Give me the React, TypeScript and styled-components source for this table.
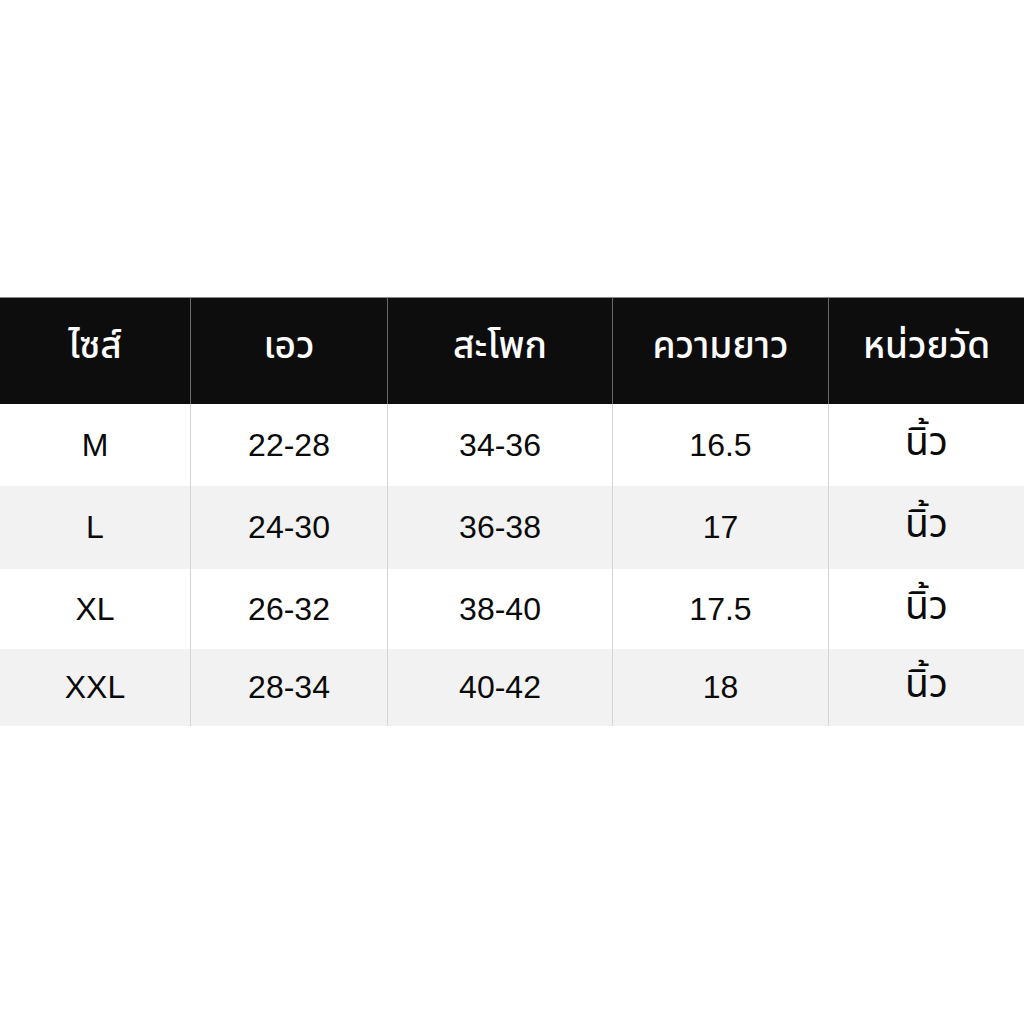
import React from "react";
import styled, { createGlobalStyle } from "styled-components";

const Global = createGlobalStyle`
  html, body { margin: 0; padding: 0; background: #ffffff; }
  body { font-family: "Liberation Sans", Arial, sans-serif; }
`;

const Page = styled.div`
  width: 1024px;
  height: 1024px;
  display: flex;
  flex-direction: column;
  justify-content: flex-start;
  padding-top: 297px;
  box-sizing: border-box;
`;

const Table = styled.div`
  display: grid;
  grid-template-columns: 190px 197px 225px 216px 196px;
  width: 1024px;
`;

const HeadCell = styled.div<{ $first?: boolean }>`
  height: 107px;
  box-sizing: border-box;
  background: #0d0d0d;
  border-top: 1px solid #8a8a8a;
  border-left: ${(p) => (p.$first ? "none" : "1px solid #6a6a6a")};
  color: #ffffff;
  display: flex;
  align-items: center;
  justify-content: center;
  font-family: "Noto Sans Thai", "Loma", "Garuda", "DejaVu Sans", sans-serif;
  font-size: 37px;
  font-weight: 500;
  padding-bottom: 8px;
`;

const Cell = styled.div<{ $first?: boolean; $shade?: boolean; $h: number }>`
  height: ${(p) => p.$h}px;
  box-sizing: border-box;
  background: ${(p) => (p.$shade ? "#f2f2f2" : "#ffffff")};
  border-left: ${(p) => (p.$first ? "none" : "1px solid #d4d4d4")};
  color: #0a0a0a;
  display: flex;
  align-items: center;
  justify-content: center;
  font-family: "Liberation Sans", Arial, sans-serif;
  font-size: 32px;
`;

const ThaiUnit = styled.span`
  font-family: "Noto Sans Thai", "Loma", "Garuda", "DejaVu Sans", sans-serif;
  font-size: 39px;
  line-height: 1;
  position: relative;
  top: -2px;
`;

const headers = ["ไซส์", "เอว", "สะโพก", "ความยาว", "หน่วยวัด"];
const rows = [
  ["M", "22-28", "34-36", "16.5"],
  ["L", "24-30", "36-38", "17"],
  ["XL", "26-32", "38-40", "17.5"],
  ["XXL", "28-34", "40-42", "18"],
];
const heights = [82, 83, 80, 77];

export default function App() {
  return (
    <>
      <Global />
      <Page>
        <Table>
          {headers.map((h, i) => (
            <HeadCell key={h} $first={i === 0}>
              {h}
            </HeadCell>
          ))}
          {rows.map((r, ri) => (
            <React.Fragment key={ri}>
              {r.map((c, ci) => (
                <Cell key={ci} $first={ci === 0} $shade={ri % 2 === 1} $h={heights[ri]}>
                  {c}
                </Cell>
              ))}
              <Cell $shade={ri % 2 === 1} $h={heights[ri]}>
                <ThaiUnit>นิ้ว</ThaiUnit>
              </Cell>
            </React.Fragment>
          ))}
        </Table>
      </Page>
    </>
  );
}
